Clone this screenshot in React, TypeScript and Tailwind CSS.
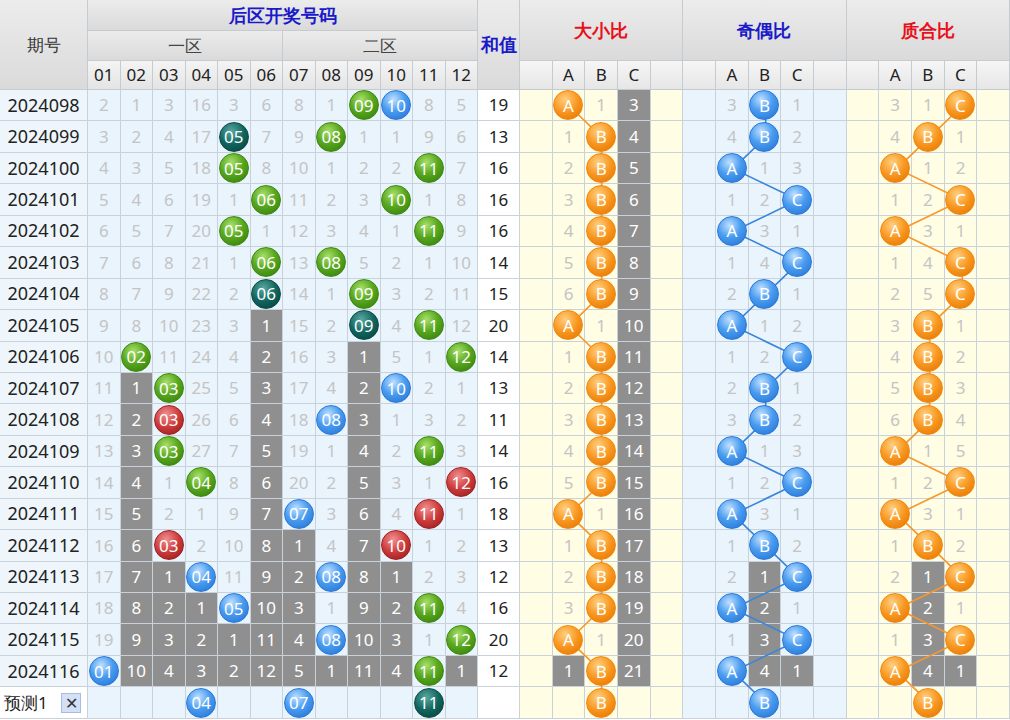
import React from "react";

const rows: [string, string, string, string, string, string][] = [
  ["2024098", "2 1 3 16 3 6 8 1 09G 10B 8 5", "19", "A 1 3g", "3 B 1", "3 1 C"],
  ["2024099", "3 2 4 17 05T 7 9 08G 1 1 9 6", "13", "1 B 4g", "4 B 2", "4 B 1"],
  ["2024100", "4 3 5 18 05G 8 10 1 2 2 11G 7", "16", "2 B 5g", "A 1 3", "A 1 2"],
  ["2024101", "5 4 6 19 1 06G 11 2 3 10G 1 8", "16", "3 B 6g", "1 2 C", "1 2 C"],
  ["2024102", "6 5 7 20 05G 1 12 3 4 1 11G 9", "16", "4 B 7g", "A 3 1", "A 3 1"],
  ["2024103", "7 6 8 21 1 06G 13 08G 5 2 1 10", "14", "5 B 8g", "1 4 C", "1 4 C"],
  ["2024104", "8 7 9 22 2 06T 14 1 09G 3 2 11", "15", "6 B 9g", "2 B 1", "2 5 C"],
  ["2024105", "9 8 10 23 3 1g 15 2 09T 4 11G 12", "20", "A 1 10g", "A 1 2", "3 B 1"],
  ["2024106", "10 02G 11 24 4 2g 16 3 1g 5 1 12G", "14", "1 B 11g", "1 2 C", "4 B 2"],
  ["2024107", "11 1g 03G 25 5 3g 17 4 2g 10B 2 1", "13", "2 B 12g", "2 B 1", "5 B 3"],
  ["2024108", "12 2g 03R 26 6 4g 18 08B 3g 1 3 2", "11", "3 B 13g", "3 B 2", "6 B 4"],
  ["2024109", "13 3g 03G 27 7 5g 19 1 4g 2 11G 3", "14", "4 B 14g", "A 1 3", "A 1 5"],
  ["2024110", "14 4g 1 04G 8 6g 20 2 5g 3 1 12R", "16", "5 B 15g", "1 2 C", "1 2 C"],
  ["2024111", "15 5g 2 1 9 7g 07B 3 6g 4 11R 1", "18", "A 1 16g", "A 3 1", "A 3 1"],
  ["2024112", "16 6g 03R 2 10 8g 1g 4 7g 10R 1 2", "13", "1 B 17g", "1 B 2", "1 B 2"],
  ["2024113", "17 7g 1g 04B 11 9g 2g 08B 8g 1g 2 3", "12", "2 B 18g", "2 1g C", "2 1g C"],
  ["2024114", "18 8g 2g 1g 05B 10g 3g 1 9g 2g 11G 4", "16", "3 B 19g", "A 2g 1", "A 2g 1"],
  ["2024115", "19 9g 3g 2g 1g 11g 4g 08B 10g 3g 1 12G", "20", "A 1 20g", "1 3g C", "1 3g C"],
  ["2024116", "01B 10g 4g 3g 2g 12g 5g 1g 11g 4g 11G 1g", "12", "1g B 21g", "A 4g 1g", "A 4g 1g"],
];
const predNums = "_ _ _ 04B _ _ 07B _ _ _ 11T _".split(" ");

const ballCls: Record<string, string> = {
  G: "bg-[radial-gradient(circle_at_40%_30%,#a8e06a_0%,#5aa820_45%,#2f7a08_100%)] border-[#3d8a10]",
  B: "bg-[radial-gradient(circle_at_40%_30%,#bfe0ff_0%,#4a9cf0_45%,#1f6fd0_100%)] border-[#2a78d8]",
  T: "bg-[radial-gradient(circle_at_40%_30%,#5aa8a0_0%,#11645e_50%,#063c38_100%)] border-[#0a4c48]",
  R: "bg-[radial-gradient(circle_at_40%_30%,#f09090_0%,#cc3a3a_50%,#8e1818_100%)] border-[#a02020]",
  O: "bg-[radial-gradient(circle_at_40%_30%,#ffd080_0%,#f8961e_50%,#e07000_100%)] border-[#f08a10]",
};

const font = "font-['Noto_Sans','Liberation_Sans',sans-serif]";
const RH = 31.44;

function Ball({ t, c }: { t: string; c: string }) {
  return (
    <div className={`relative z-10 w-[30px] h-[30px] rounded-full border flex items-center justify-center text-white text-[17px] leading-none ${ballCls[c]}`}>
      {t}
    </div>
  );
}

function Cell({ tok, bg, ballColor }: { tok: string; bg: string; ballColor?: string }) {
  let content: React.ReactNode = null;
  let cls = bg;
  if (tok === "_") content = null;
  else if (/^[ABC]$/.test(tok)) content = <Ball t={tok} c={ballColor!} />;
  else if (/^\d\d[GBTR]$/.test(tok)) content = <Ball t={tok.slice(0, 2)} c={tok[2]} />;
  else if (tok.endsWith("g")) {
    cls = "bg-[#8f8f8f]";
    content = <span className="text-white">{tok.slice(0, -1)}</span>;
  } else content = <span className="text-[#c4c4c4]">{tok}</span>;
  return (
    <div className={`h-[31.44px] border-r border-b border-[#c9d2da] flex items-center justify-center text-[17px] ${cls}`}>
      {content}
    </div>
  );
}

const secBg = ["bg-[#fffde3]", "bg-[#eaf4fd]", "bg-[#fffde3]"];
const secColor = ["O", "B", "O"];
const secStart = [520, 684, 848];
const W = 32.67;

function lines() {
  const out: React.ReactNode[] = [];
  for (let s = 0; s < 3; s++) {
    const pts: string[] = [];
    rows.forEach((r, i) => {
      const toks = r[3 + s].split(" ");
      const k = toks.findIndex((t) => /^[ABC]$/.test(t));
      pts.push(`${secStart[s] + (k + 1.5) * W},${(i + 0.5) * RH}`);
    });
    pts.push(`${secStart[s] + 2.5 * W},${(rows.length + 0.5) * RH}`);
    out.push(
      <polyline key={s} points={pts.join(" ")} fill="none" stroke={s === 1 ? "#3a86d8" : "#f8962a"} strokeWidth={1.6} />
    );
  }
  return out;
}

const hdr = "bg-[linear-gradient(#ececec,#dadada)] border-r border-b border-[#c4ccd2] flex items-center justify-center";
const cols = "grid grid-cols-[88px_repeat(12,32.5px)_42px_repeat(15,1fr)]";

export default function App() {
  return (
    <div className={`relative w-[1010px] h-[720px] overflow-hidden bg-white text-[#222] ${font}`}>
      <div className={`${cols} grid-rows-[31px_30px_29px]`}>
        <div className={`${hdr} row-span-3 text-[17px] text-[#333]`}>期号</div>
        <div className={`${hdr} col-span-12 text-[18px] font-bold text-[#1a1ac8]`}>后区开奖号码</div>
        <div className={`${hdr} row-span-3 text-[18px] font-bold text-[#1a1ac8]`}>和值</div>
        <div className={`${hdr} col-span-5 row-span-2 text-[18px] font-bold text-[#e8101a]`}>大小比</div>
        <div className={`${hdr} col-span-5 row-span-2 text-[18px] font-bold text-[#1a1ac8]`}>奇偶比</div>
        <div className={`${hdr} col-span-5 row-span-2 text-[18px] font-bold text-[#e8101a]`}>质合比</div>
        <div className={`${hdr} col-start-2 col-span-6 text-[17px] text-[#444]`}>一区</div>
        <div className={`${hdr} col-span-6 text-[17px] text-[#444]`}>二区</div>
        {Array.from({ length: 12 }, (_, i) => (
          <div key={i} className={`${hdr} text-[17px] bg-[linear-gradient(#f4f4f4,#e4e4e4)]`} style={{ gridColumnStart: i + 2, gridRowStart: 3 }}>
            {String(i + 1).padStart(2, "0")}
          </div>
        ))}
        {[0, 1, 2].map((s) =>
          ["", "A", "B", "C", ""].map((l, j) => (
            <div key={`${s}${j}`} className={`${hdr} text-[17px] bg-[linear-gradient(#f6f6f6,#e6e6e6)]`} style={{ gridColumnStart: 15 + s * 5 + j, gridRowStart: 3 }}>
              {l}
            </div>
          ))
        )}
      </div>
      <div className="relative">
        <svg className="absolute left-0 top-0 z-[5] pointer-events-none" width={1010} height={630}>
          {lines()}
        </svg>
        {rows.map((r) => (
          <div key={r[0]} className={cols}>
            <div className="h-[31.44px] border-r border-b border-[#c9d2da] bg-[#eef6fc] flex items-center justify-center text-[18px]">{r[0]}</div>
            {r[1].split(" ").map((t, i) => (
              <Cell key={i} tok={t} bg="bg-[#eaf4fd]" />
            ))}
            <div className="h-[31.44px] border-r border-b border-[#c9d2da] bg-white flex items-center justify-center text-[17px]">{r[2]}</div>
            {[0, 1, 2].map((s) => {
              const toks = ["_", ...r[3 + s].split(" "), "_"];
              return toks.map((t, j) => <Cell key={`${s}${j}`} tok={t} bg={secBg[s]} ballColor={secColor[s]} />);
            })}
          </div>
        ))}
        <div className={cols}>
          <div className="h-[31.44px] border-r border-b border-[#c9d2da] bg-white flex items-center justify-between pl-1 pr-[6px] text-[17px]">
            <span>预测1</span>
            <span className="w-[20px] h-[20px] bg-[#d3e0f5] border border-[#a8bde0] flex items-center justify-center text-[16px] leading-none text-[#333]">✕</span>
          </div>
          {predNums.map((t, i) => (
            <Cell key={i} tok={t} bg="bg-[#eaf4fd]" />
          ))}
          <div className="h-[31.44px] border-r border-b border-[#c9d2da] bg-white" />
          {[0, 1, 2].map((s) =>
            ["_", "_", "B", "_", "_"].map((t, j) => <Cell key={`${s}${j}`} tok={t} bg={secBg[s]} ballColor={secColor[s]} />)
          )}
        </div>
      </div>
    </div>
  );
}
